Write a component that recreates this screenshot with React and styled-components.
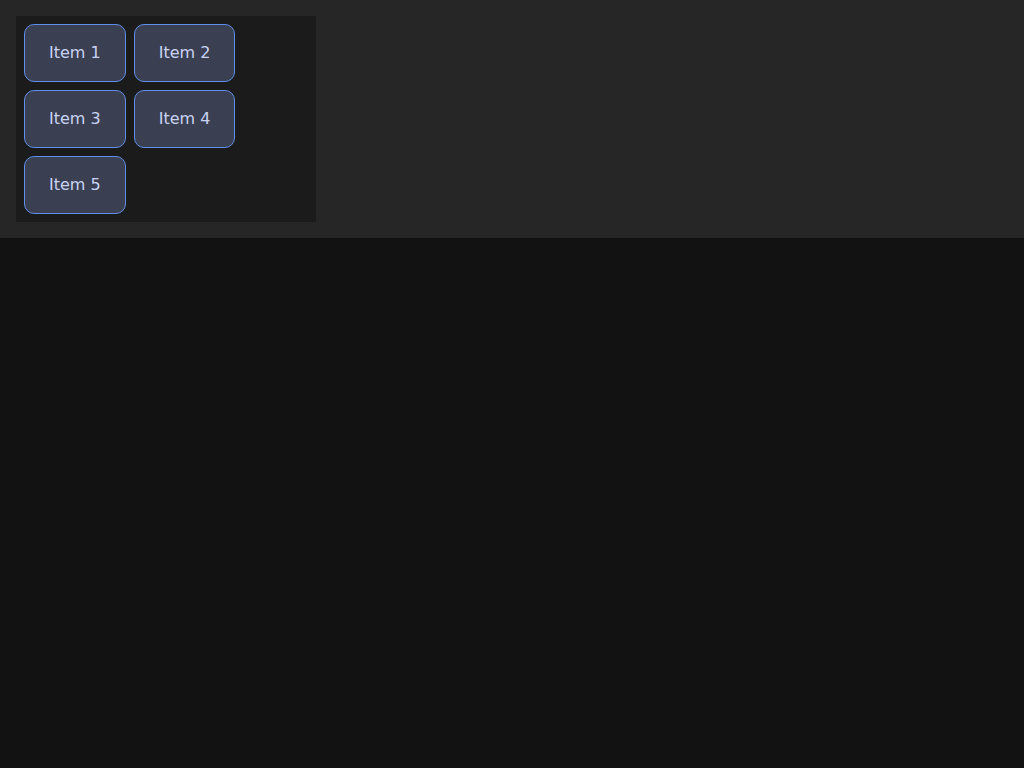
import styled, { createGlobalStyle } from "styled-components";

const GlobalStyle = createGlobalStyle`
    html, body {
        margin: 0;
        padding: 0;
        background-color: #121212;
        font-family: "DejaVu Sans", sans-serif;
    }
`;

const Section = styled.section`
    background-color: #262626;
    padding: 16px;
`;

const Panel = styled.div`
    width: 300px;
    box-sizing: border-box;
    padding: 8px;
    background-color: #1b1b1b;
    display: flex;
    flex-wrap: wrap;
    gap: 8px;
    align-content: flex-start;
`;

const Item = styled.div`
    padding: 19px 24px;
    background-color: #3b3f52;
    border: 1px solid #5f8fea;
    border-radius: 10px;
    color: #c9d3f2;
    font-size: 16px;
    line-height: 18px;
`;

const items = ["Item 1", "Item 2", "Item 3", "Item 4", "Item 5"];

export default function App() {
    return (
        <>
            <GlobalStyle />
            <Section>
                <Panel>
                    {items.map((label) => (
                        <Item key={label}>{label}</Item>
                    ))}
                </Panel>
            </Section>
        </>
    );
}
